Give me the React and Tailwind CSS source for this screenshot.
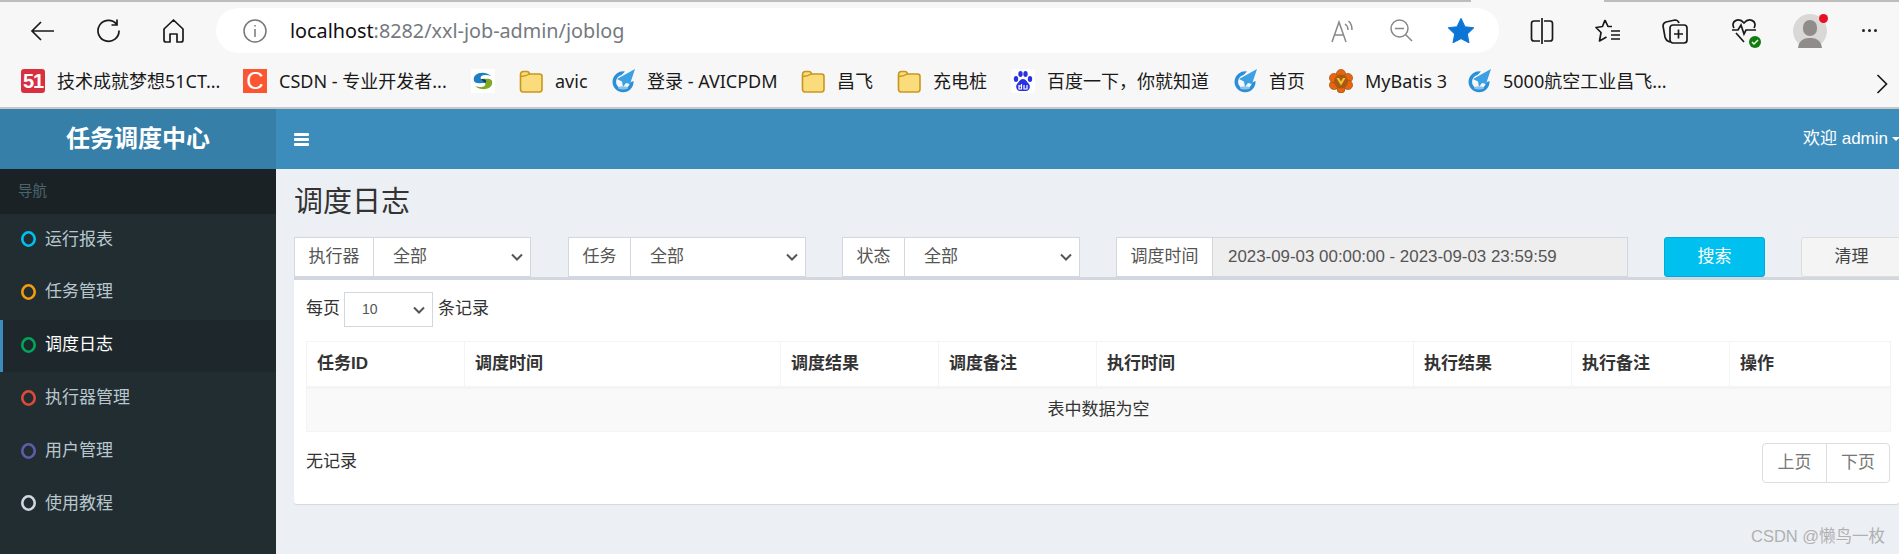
import React from 'react'

const sans = 'font-["Liberation_Sans","Noto_Sans_CJK_SC",sans-serif]'
const chrome = 'font-["Noto_Sans","Noto_Sans_CJK_SC",sans-serif]'

const Folder = () => (
  <svg width="24" height="24" viewBox="0 0 24 24">
    <path d="M1.5 6 Q1.5 2.5 4.5 2.5 L8 2.5 Q10 2.5 10.5 5 L20.5 5 Q23 5 23 7.5 L23 20 Q23 23 20.5 23 L4 23 Q1.5 23 1.5 20 Z" fill="#fbdc7c" stroke="#c8961c" strokeWidth="1.6" />
    <path d="M1.5 7.5 Q6 7.5 10.5 5" fill="none" stroke="#c8961c" strokeWidth="1.4" />
  </svg>
)

const Plane = () => (
  <svg width="24" height="24" viewBox="0 0 24 24">
    <path d="M14 2.5 A10.5 10.5 0 1 0 22.5 12 L19 13.5 A7 7 0 1 1 10.5 6 Z" fill="#2a8fd8" />
    <path d="M24 0 L6 10 L11 12.5 L12 18 L15 14 L19 15 Z" fill="#3ba0e4" />
    <ellipse cx="12" cy="18.8" rx="5" ry="1.6" fill="#8cc4e8" />
  </svg>
)

const Swirl = () => (
  <svg width="24" height="24" viewBox="0 0 24 24">
    <rect width="24" height="24" fill="#fff" />
    <path d="M3 12 C1 4 13 1 20 7 C15 5 8 6 10 10 C11 12 13 13 14 14 C9 14 4 15 3 12 Z" fill="#1d7fc4" />
    <path d="M21 12 C23 20 11 23 4 17 C9 19 16 18 14 14 C13 12 11 11 10 10 C15 10 20 9 21 12 Z" fill="#7fa824" />
    <path d="M10 10 C11 12 13 13 14 14 C16 13 15 11 14 10.5 C12 10 11 10 10 10 Z" fill="#12365c" />
  </svg>
)

const Baidu = () => (
  <svg width="24" height="24" viewBox="0 0 24 24">
    <rect width="24" height="24" rx="3" fill="#fff" />
    <g fill="#2932e1">
      <ellipse cx="5" cy="10" rx="2.2" ry="3" />
      <ellipse cx="9.5" cy="5" rx="2.2" ry="3" />
      <ellipse cx="14.5" cy="5" rx="2.2" ry="3" />
      <ellipse cx="19" cy="10" rx="2.2" ry="3" />
      <path d="M12 10 C15 10 16 13 18 15 C20 18 18 22 15 22 L9 22 C6 22 4 18 6 15 C8 13 9 10 12 10 Z" />
    </g>
    <path d="M8 16 V20 H10.5 V15 M10.5 17 H8 M13 16 V20 H16 V16" fill="none" stroke="#fff" strokeWidth="1.2" />
  </svg>
)

const MyBatis = () => (
  <svg width="24" height="24" viewBox="0 0 24 24">
    <g fill="#e8650e" stroke="#8c4a12" strokeWidth="0.6">
      <circle cx="12" cy="5" r="4.6" />
      <circle cx="19" cy="9" r="4.6" />
      <circle cx="19" cy="16" r="4.6" />
      <circle cx="12" cy="20" r="4" />
      <circle cx="5" cy="16" r="4.6" />
      <circle cx="5" cy="9" r="4.6" />
    </g>
    <circle cx="12" cy="12.5" r="7" fill="#a85a14" />
    <path d="M7.5 9 L12 16.5 L16.5 9 L14 9 L12 12.5 L10 9 Z" fill="#f2c531" />
  </svg>
)

const Tile51 = () => (
  <div className="w-6 h-6 rounded-[3px] bg-[#d9303f] text-white text-[20px] leading-6 font-bold tracking-tighter text-center font-['Liberation_Sans',sans-serif]">51</div>
)

const TileC = () => (
  <div className="w-6 h-6 bg-[#fc5531] text-white text-[24px] leading-6 text-center font-['Liberation_Sans',sans-serif]">C</div>
)

const bookmarks = [
  { icon: <Tile51 />, text: '技术成就梦想51CT...', w: 'w-[162px]' },
  { icon: <TileC />, text: 'CSDN - 专业开发者...', w: 'w-[168px]' },
  { icon: <Swirl /> },
  { icon: <Folder />, text: 'avic', w: 'w-[32px]' },
  { icon: <Plane />, text: '登录 - AVICPDM', w: 'w-[130px]' },
  { icon: <Folder />, text: '昌飞', w: 'w-[36px]' },
  { icon: <Folder />, text: '充电桩', w: 'w-[54px]' },
  { icon: <Baidu />, text: '百度一下，你就知道', w: 'w-[162px]' },
  { icon: <Plane />, text: '首页', w: 'w-[36px]' },
  { icon: <MyBatis />, text: 'MyBatis 3', w: 'w-[78px]' },
  { icon: <Plane />, text: '5000航空工业昌飞...', w: 'w-[160px]' },
]

const Toolbar = () => (
  <div className={`${chrome} bg-[#f7f7f7] h-[107px] border-t-2 border-[#bdbdbd] flex flex-col relative`}>
    <div className="absolute left-[1471px] top-[-2px] w-[133px] h-[2px] bg-[#f7f7f7]" />
    <div className="h-[53px] pt-[6px] flex items-start">
      <div className="h-[45px] w-[216px] flex items-center">
        <svg className="ml-[30px]" width="25" height="22" viewBox="0 0 25 22" fill="none" stroke="#1a1a1a" strokeWidth="1.7">
          <path d="M24 11 H2 M11 2 L2 11 L11 20" />
        </svg>
        <svg className="ml-[41px]" width="25" height="25" viewBox="0 0 25 25" fill="none" stroke="#1a1a1a" strokeWidth="1.7">
          <path d="M20.5 6 A10.5 10.5 0 1 0 23 12.5 M21 1.5 V7 H15.5" />
        </svg>
        <svg className="ml-[41px]" width="23" height="25" viewBox="0 0 23 25" fill="none" stroke="#1a1a1a" strokeWidth="1.7">
          <path d="M2 11 L11.5 2 L21 11 V22 Q21 24 19 24 H15 V16 H8 V24 H4 Q2 24 2 22 Z" strokeLinejoin="round" />
        </svg>
      </div>
      <div className="h-[45px] w-[1283px] bg-white rounded-full flex items-center shrink-0">
        <svg className="ml-[27px]" width="24" height="24" viewBox="0 0 24 24" fill="none" stroke="#777" strokeWidth="1.5">
          <circle cx="12" cy="12" r="11" />
          <path d="M12 10 V18 M12 6 V7.6" />
        </svg>
        <div className="ml-[23px] text-[19.8px] leading-none text-[#111] whitespace-nowrap">
          localhost<span className="text-[#75797f]">:8282/xxl-job-admin/joblog</span>
        </div>
        <div className="flex-1" />
        <svg width="24" height="24" viewBox="0 0 24 24" fill="none" stroke="#888" strokeWidth="1.5">
          <path d="M1 23 L8 3 L15 23 M3.5 16 H12.5 M14 5 Q17 7 17 11 M17.5 2 Q21 5 21 11" />
        </svg>
        <svg className="ml-[35px]" width="23" height="23" viewBox="0 0 23 23" fill="none" stroke="#888" strokeWidth="1.5">
          <circle cx="9.5" cy="9.5" r="8.5" />
          <path d="M5 9.5 H14 M15.5 15.5 L22 22" />
        </svg>
        <svg className="ml-[35px]" width="26" height="25" viewBox="0 0 24 23">
          <path d="M12 0.5 L15.6 8 L23.6 9 L17.8 14.7 L19.3 22.7 L12 18.8 L4.7 22.7 L6.2 14.7 L0.4 9 L8.4 8 Z" fill="#0c76d6" stroke="#0c76d6" strokeLinejoin="round" />
        </svg>
        <div className="w-[25px]" />
      </div>
      <div className="h-[45px] flex-1 flex items-center relative">
        <svg className="ml-[31px]" width="24" height="26" viewBox="0 0 24 26" fill="none" stroke="#1a1a1a" strokeWidth="1.7">
          <path d="M10 3 H4 Q1.5 3 1.5 5.5 V20.5 Q1.5 23 4 23 H10 M14 3 H20 Q22.5 3 22.5 5.5 V20.5 Q22.5 23 20 23 H14 M12 0 V26" />
        </svg>
        <svg className="ml-[41px]" width="26" height="26" viewBox="0 0 26 26" fill="none" stroke="#1a1a1a" strokeWidth="1.7">
          <path d="M10 2 L7.5 8.5 L1 9.5 L6 14.5 L4.5 23 L11.5 19 M10 2 L13 8.5 H17 M16 13 H25 M16 17 H25 M16 21 H25" strokeLinejoin="round" />
        </svg>
        <svg className="ml-[41px]" width="26" height="26" viewBox="0 0 26 26" fill="none" stroke="#1a1a1a" strokeWidth="1.7">
          <path d="M8 24 Q4 23 3 19 L1 8 Q1 5 4 4 L13 2 Q16 2 17 5" />
          <rect x="8" y="7" width="17" height="18" rx="3" />
          <path d="M16.5 11.5 V20.5 M12 16 H21" />
        </svg>
        <div className="ml-[43px] relative w-[26px] h-[26px]">
          <svg width="26" height="26" viewBox="0 0 26 26" fill="none" stroke="#1a1a1a" strokeWidth="1.7">
            <path d="M1 12 H7 L10 7 L13 16 L15 12 H25 M3 10 C-1 3 8 -1 13 5 C18 -1 27 3 23 10 M5 15 L13 24" />
          </svg>
          <svg className="absolute right-[-4px] bottom-[-4px]" width="12" height="12" viewBox="0 0 12 12">
            <circle cx="6" cy="6" r="6" fill="#107c10" />
            <path d="M3 6 L5 8 L9 4" fill="none" stroke="#fff" strokeWidth="1.4" />
          </svg>
        </div>
        <div className="ml-[36px] relative w-[34px] h-[34px] rounded-full bg-[#d9d8d6] overflow-visible">
          <div className="absolute left-[10px] top-[6px] w-[14px] h-[16px] rounded-full bg-[#8f8c8a]" />
          <div className="absolute left-[5px] top-[24px] w-[24px] h-[10px] rounded-t-full bg-[#8f8c8a]" />
          <div className="absolute right-[-1px] top-0 w-[9px] h-[9px] rounded-full bg-[#e81123]" />
        </div>
        <div className="absolute left-[363px] top-[21px] flex gap-[3px]">
          <div className="w-[3px] h-[3px] rounded-full bg-[#222]" />
          <div className="w-[3px] h-[3px] rounded-full bg-[#222]" />
          <div className="w-[3px] h-[3px] rounded-full bg-[#222]" />
        </div>
      </div>
    </div>
    <div className="flex-1 flex items-center pl-[21px] gap-[24px] text-[18px] text-[#1a1a1a] relative">
      {bookmarks.map((b, i) => (
        <div key={i} className="flex items-center gap-[12px] h-6">
          {b.icon}
          {b.text && <span className={`${b.w} whitespace-nowrap`}>{b.text}</span>}
        </div>
      ))}
      <svg className="absolute left-[1876px] top-[18px]" width="12" height="22" viewBox="0 0 12 22" fill="none" stroke="#1a1a1a" strokeWidth="1.7">
        <path d="M1.5 2 L10.5 11 L1.5 20" />
      </svg>
    </div>
  </div>
)

const menu = [
  { name: '运行报表', color: 'stroke-[#00c0ef]' },
  { name: '任务管理', color: 'stroke-[#f39c12]' },
  { name: '调度日志', color: 'stroke-[#00a65a]', active: true },
  { name: '执行器管理', color: 'stroke-[#dd4b39]' },
  { name: '用户管理', color: 'stroke-[#605ca8]' },
  { name: '使用教程', color: 'stroke-[#d2d6de]' },
]

const Sidebar = () => (
  <div className="w-[276px] bg-[#222d32] shrink-0">
    <div className="h-[60px] bg-[#367fa9] text-white text-[24px] font-bold flex items-center justify-center">任务调度中心</div>
    <div className="h-[45px] bg-[#1a2226] text-[#4b646f] text-[14.5px] flex items-center pl-[18px]">导航</div>
    {menu.map((m) => (
      <div key={m.name} className={`h-[52.8px] flex items-center border-l-[3px] pl-[18px] pb-[2px] text-[17px] ${m.active ? 'bg-[#1e282c] border-[#3c8dbc] text-white' : 'border-transparent text-[#b8c7ce]'}`}>
        <svg width="15" height="16" viewBox="0 0 15 16" fill="none" className={m.color} strokeWidth="2.6">
          <ellipse cx="7.5" cy="8" rx="6.2" ry="6.7" />
        </svg>
        <span className="ml-[9px]">{m.name}</span>
      </div>
    ))}
  </div>
)

const Chevron = () => (
  <svg width="12" height="8" viewBox="0 0 12 8" fill="none" stroke="#555" strokeWidth="2">
    <path d="M1 1.5 L6 6.5 L11 1.5" />
  </svg>
)

const Filter = ({ label, labelW, selectW }) => (
  <div className="flex h-10">
    <div className={`${labelW} bg-white border border-[#d2d6de] flex items-center justify-center text-[17px] text-[#555]`}>{label}</div>
    <div className={`${selectW} bg-white border border-l-0 border-[#d2d6de] flex items-center justify-between pl-[19px] pr-[7px] text-[17px] text-[#555]`}>
      <span>全部</span>
      <Chevron />
    </div>
  </div>
)

const cols = [
  { name: '任务ID', w: 'w-[158px]' },
  { name: '调度时间', w: 'w-[316px]' },
  { name: '调度结果', w: 'w-[158px]' },
  { name: '调度备注', w: 'w-[158px]' },
  { name: '执行时间', w: 'w-[317px]' },
  { name: '执行结果', w: 'w-[158px]' },
  { name: '执行备注', w: 'w-[158px]' },
  { name: '操作', w: 'w-[161px]' },
]

const Content = () => (
  <div className="flex-1 bg-[#ecf0f5] pl-[18px] min-w-0">
    <div className="h-[68px] flex items-center text-[29px] text-[#333]">调度日志</div>
    <div className="flex h-10 w-[1700px]">
      <Filter label="执行器" labelW="w-[80px]" selectW="w-[157px]" />
      <div className="w-[37px]" />
      <Filter label="任务" labelW="w-[63px]" selectW="w-[175px]" />
      <div className="w-[36px]" />
      <Filter label="状态" labelW="w-[63px]" selectW="w-[175px]" />
      <div className="w-[36px]" />
      <div className="flex h-10">
        <div className="w-[97px] bg-white border border-[#d2d6de] flex items-center justify-center text-[17px] text-[#555]">调度时间</div>
        <div className="w-[415px] bg-[#eeeeee] border border-l-0 border-[#d2d6de] flex items-center pl-[15px] text-[16.9px] text-[#555]">2023-09-03 00:00:00 - 2023-09-03 23:59:59</div>
      </div>
      <div className="w-[36px]" />
      <div className="w-[101px] bg-[#00c0ef] border border-[#00acd6] rounded-[3px] text-white text-[17px] flex items-center justify-center">搜索</div>
      <div className="w-[36px]" />
      <div className="w-[101px] bg-[#f4f4f4] border border-[#ddd] rounded-[3px] text-[#444] text-[17px] flex items-center justify-center">清理</div>
    </div>
    <div className="h-[227px] w-full bg-white border-t-[3px] border-[#d2d6de] rounded-b-[3px] shadow-[0_1px_1px_rgba(0,0,0,0.1)] px-[12px] text-[17px] text-[#333] flex flex-col">
      <div className="flex items-center mt-[12px] h-[35px]">
        <span className="pb-[1px]">每页</span>
        <div className="ml-[4px] w-[89px] h-[35px] border border-[#d2d6de] flex items-center justify-between pl-[17px] pr-[7px] text-[14px] text-[#555]">
          <span>10</span>
          <Chevron />
        </div>
        <span className="ml-[5px] pb-[1px]">条记录</span>
      </div>
      <table className="mt-[14px] w-[1584px] table-fixed border-collapse">
        <thead>
          <tr className="h-[46px]">
            {cols.map((c) => (
              <th key={c.name} className={`${c.w} border border-b-[3px] border-[#f4f4f4] text-left pl-[10px] pb-[1px] font-bold`}>{c.name}</th>
            ))}
          </tr>
        </thead>
        <tbody>
          <tr className="h-[44px] bg-[#f9f9f9]">
            <td colSpan={8} className="border border-[#f4f4f4] text-center">表中数据为空</td>
          </tr>
        </tbody>
      </table>
      <div className="flex items-start justify-between w-[1584px] mt-[11px]">
        <span className="mt-[6px]">无记录</span>
        <div className="flex h-10 text-[#777] border border-[#ddd] rounded-[4px]">
          <div className="w-[63px] flex items-center justify-center">上页</div>
          <div className="w-[63px] flex items-center justify-center border-l border-[#ddd]">下页</div>
        </div>
      </div>
    </div>
  </div>
)

export default function App() {
  return (
    <div className={`${sans} w-[1899px] h-[554px] overflow-hidden relative flex flex-col`}>
      <Toolbar />
      <div className="h-[2px] bg-[#c8c8c8]" />
      <div className="flex flex-1 min-h-0">
        <Sidebar />
        <div className="flex-1 flex flex-col min-w-0">
          <div className="h-[60px] bg-[#3c8dbc] shrink-0 flex items-center justify-between text-white">
            <div className="ml-[18px] w-[15px] flex flex-col gap-[2px]">
              <div className="h-[3px] bg-white rounded-[1px]" />
              <div className="h-[3px] bg-white rounded-[1px]" />
              <div className="h-[3px] bg-white rounded-[1px]" />
            </div>
            <div className="flex items-center text-[17px]">
              欢迎 admin
              <div className="ml-[4px] w-0 h-0 border-x-[4px] border-x-transparent border-t-[4px] border-t-white mr-[-1px]" />
            </div>
          </div>
          <Content />
        </div>
      </div>
      <div className="absolute left-[1751px] top-[524px] text-[16.5px] text-[#b0b0b0]">CSDN @懒鸟一枚</div>
    </div>
  )
}
